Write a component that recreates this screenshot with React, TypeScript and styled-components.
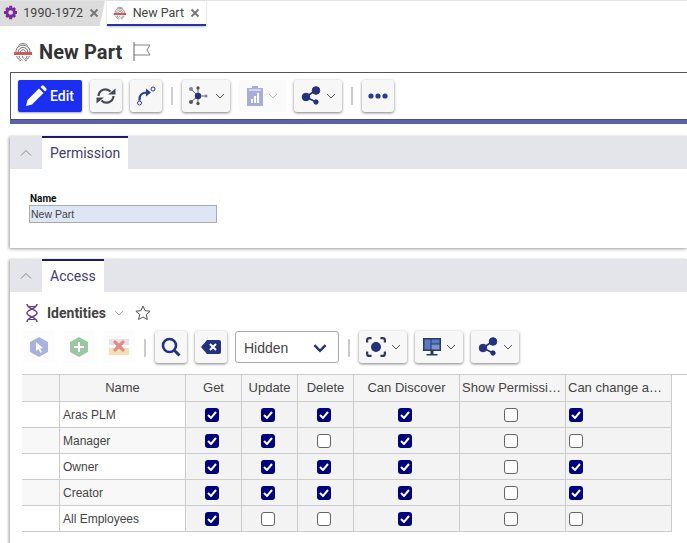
import React, { FC, ReactNode } from "react";
import styled, { createGlobalStyle } from "styled-components";

const GlobalStyle = createGlobalStyle`
  html, body {
    margin: 0;
    padding: 0;
    background: #fff;
    overflow: hidden;
  }
  body {
    font-family: Roboto, "Liberation Sans", sans-serif;
    color: #333;
  }
  * { box-sizing: border-box; }
`;

const Page = styled.div`
  width: 687px;
  height: 543px;
  overflow: hidden;
  display: flex;
  flex-direction: column;
  > * {
    flex: none;
  }
`;

const TabBar = styled.div`
  height: 26px;
  display: flex;
  gap: 2px;
  background: #fff;
  border-top: 1px solid #e4e4e4;
`;

const WindowTab = styled.div<{ $active?: boolean }>`
  width: ${(p) => (p.$active ? "99px" : "105px")};
  height: 25px;
  display: flex;
  align-items: center;
  gap: ${(p) => (p.$active ? "6px" : "6px")};
  padding: 0 0 ${(p) => (p.$active ? "0" : "2px")} ${(p) => (p.$active ? "6px" : "4px")};
  font-size: 12.5px;
  white-space: nowrap;
  color: #444;
  background: ${(p) => (p.$active ? "#fff" : "#dcdcdc")};
  border-bottom: ${(p) => (p.$active ? "2px solid #2a2fb0" : "none")};
  box-shadow: ${(p) => (p.$active ? "0 1px 2px rgba(0,0,0,.25)" : "none")};
  clip-path: ${(p) => (p.$active ? "none" : "polygon(0 0, 100% 0, 95% 100%, 0 100%)")};
`;

const TabClose = styled.span`
  margin-left: auto;
  margin-right: 6px;
  display: flex;
`;

const TitleRow = styled.div`
  height: 46px;
  display: flex;
  align-items: center;
  gap: 6px;
  padding: 6px 0 0 13px;
`;

const Title = styled.h1`
  margin: 0;
  font-size: 20px;
  font-weight: 700;
  color: #333;
  letter-spacing: 0.1px;
`;

const FlagWrap = styled.span`
  display: flex;
  margin-left: 5px;
`;

const ToolbarFrame = styled.div`
  margin-left: 10px;
  height: 48px;
  border-top: 1px solid #555;
  border-left: 1px solid #555;
  border-bottom: 1px solid #555;
  display: flex;
  align-items: center;
  gap: 8px;
  padding-left: 7px;
  background: #fff;
`;

const ToolbarStripe = styled.div`
  margin-left: 10px;
  height: 4px;
  background: #5a62ad;
`;

const PrimaryButton = styled.button`
  width: 64px;
  height: 32px;
  border: none;
  border-radius: 2px;
  background: #1a2ff2;
  color: #fff;
  font: 500 14px Roboto, sans-serif;
  display: flex;
  align-items: center;
  justify-content: center;
  gap: 3px;
  padding: 0 1px 0 0;
  box-shadow: 0 1px 2px rgba(0, 0, 0, 0.35);
`;

const IconButton = styled.button<{ $width?: number; $disabled?: boolean }>`
  width: ${(p) => p.$width ?? 32}px;
  height: 32px;
  border: none;
  border-radius: 3px;
  background: ${(p) => (p.$disabled ? "#fafafa" : "#f7f7f7")};
  box-shadow: ${(p) => (p.$disabled ? "none" : "0 1px 3px rgba(0,0,0,.5)")};
  display: flex;
  align-items: center;
  justify-content: center;
  gap: 5px;
  padding: 0;
  flex: none;
`;

const ToolSep = styled.span`
  width: 2px;
  height: 18px;
  background: #ccc;
  flex: none;
  margin: 0 1px;
`;

const Panel = styled.section<{ $height: number; $gap: number }>`
  margin: ${(p) => p.$gap}px 0 0 10px;
  height: ${(p) => p.$height}px;
  background: #fff;
  box-shadow: -1px 1px 3px rgba(0, 0, 0, 0.4);
`;

const PanelHeader = styled.div`
  height: 33px;
  background: #e4e5ea;
  display: flex;
`;

const Collapse = styled.span`
  width: 32px;
  display: flex;
  align-items: center;
  justify-content: center;
`;

const PanelTab = styled.div`
  padding: 0 8px 2px;
  display: flex;
  align-items: center;
  background: #fff;
  border-top: 2px solid #1b1a6b;
  font-size: 14px;
  color: #3f3d70;
`;

const FormBody = styled.div`
  padding: 23px 0 0 19px;
`;

const FieldLabel = styled.label`
  display: block;
  font: 700 10px/13px Roboto, "Liberation Sans", sans-serif;
  color: #111;
  padding-left: 1px;
`;

const FieldInput = styled.div`
  width: 188px;
  height: 18px;
  background: #dce6f5;
  border: 1px solid #aaa;
  font: 10.5px/16px "Liberation Sans", sans-serif;
  padding-left: 1px;
  color: #444;
`;

const IdentityRow = styled.div`
  height: 39px;
  padding: 9px 0 6px 15px;
  display: flex;
  align-items: center;
  gap: 8px;
`;

const IdentityTitle = styled.span`
  font-size: 14px;
  font-weight: 700;
  line-height: 24px;
  color: #444;
`;

const StarWrap = styled.span`
  display: flex;
  margin-left: 3px;
`;

const GridToolbar = styled.div`
  height: 34px;
  display: flex;
  align-items: flex-start;
  gap: 8px;
  padding-left: 13px;
`;

const FadedIcon = styled.span`
  width: 32px;
  height: 32px;
  display: flex;
  align-items: center;
  justify-content: center;
  background: #fcfcfc;
  flex: none;
`;

const ToolbarGap = styled(ToolSep)`
  align-self: center;
`;

const SelectBox = styled.div`
  width: 104px;
  height: 32px;
  border: 1px solid #aaa;
  border-radius: 3px;
  display: flex;
  align-items: center;
  justify-content: space-between;
  padding: 2px 11px 0 8px;
  font: 14px "Liberation Sans", sans-serif;
  color: #444;
  flex: none;
`;

const GridWrap = styled.div`
  margin: 9px 0 0 12px;
  border-top: 1px solid #ccc;
`;

const Table = styled.div`
  display: grid;
  grid-template-columns: 38px 126px 56px 56px 56px 106px 106px 106px;
  grid-template-rows: 27px;
  grid-auto-rows: 26px;
  width: 650px;
`;

const HeadCell = styled.div<{ $start?: boolean }>`
  background: #f5f5f5;
  border-right: 1px solid #ccc;
  border-bottom: 1px solid #ccc;
  display: flex;
  align-items: center;
  justify-content: ${(p) => (p.$start ? "flex-start" : "center")};
  padding: 0 0 2px ${(p) => (p.$start ? "2px" : "0")};
  font: 13px "Liberation Sans", sans-serif;
  color: #444;
  white-space: nowrap;
  overflow: hidden;
`;

const RowHead = styled.div<{ $shade: boolean }>`
  background: ${(p) => (p.$shade ? "#f8f8f8" : "#fff")};
  border-right: 1px solid #ccc;
  border-bottom: 1px solid #ccc;
`;

const NameCell = styled(RowHead)`
  display: flex;
  align-items: center;
  padding-left: 3px;
  font: 12px "Liberation Sans", sans-serif;
  color: #444;
`;

const CheckCell = styled.div<{ $start?: boolean }>`
  background: #f3f3f3;
  border-right: 1px solid #ccc;
  border-bottom: 1px solid #ccc;
  display: flex;
  align-items: center;
  justify-content: ${(p) => (p.$start ? "flex-start" : "center")};
  padding-left: ${(p) => (p.$start ? "3px" : "0")};
`;

const CheckMark = styled.span<{ $on: boolean }>`
  width: 14px;
  height: 14px;
  margin-right: 3px;
  border-radius: 3px;
  background: ${(p) => (p.$on ? "#00007f" : "#fff")};
  border: ${(p) => (p.$on ? "none" : "1px solid #666")};
  display: flex;
  align-items: center;
  justify-content: center;
`;

const Chev: FC<{ color?: string; size?: number; width?: number }> = ({ color = "#555", size = 10, width = 1 }) => (
  <svg width={size} height={size} viewBox="0 0 10 10" fill="none">
    <path d="M1 3l4 4 4-4" stroke={color} strokeWidth={width} />
  </svg>
);

const Close = () => (
  <svg width="10" height="10" viewBox="0 0 10 10" fill="none" stroke="#777" strokeWidth="2">
    <path d="M1.500 1.500l7 7M8.500 1.500l-7 7" />
  </svg>
);

const Fingerprint: FC<{ size: number }> = ({ size }) => (
  <svg width={size} height={size} viewBox="0 0 20 20" fill="none" stroke="#6f6f6f" strokeWidth="1">
    <path d="M5.500 3.500c2-2.500 7-2.500 9 0" />
    <path d="M3 10c0-9 14-9 14 0" />
    <path d="M5.300 10c0-6 9.400-6 9.400 0" />
    <path d="M7.500 10c0-3 5-3 5 0" />
    <path d="M3.500 14c1 2 2.500 4 4.500 5" />
    <path d="M16.500 14c-1 2-2.500 4-4.500 5" />
    <path d="M6 14c.5 2 2.300 3.500 3.500 4.500" />
    <path d="M14 14c-.5 2-1.500 3-2.500 4" />
    <path d="M9.500 14c0 1 .5 2 1 2.500" />
    <rect x="1" y="10" width="18" height="3" fill="#cf5a55" stroke="none" />
  </svg>
);

const Flag = () => (
  <svg width="18" height="20" viewBox="0 0 18 20" fill="none" stroke="#666" strokeWidth="1">
    <path d="M1 0v19" />
    <path d="M1 3h16l-3 5 3 5H1" strokeWidth=".8" />
  </svg>
);

const Pencil = () => (
  <svg width="22" height="22" viewBox="0 0 22 22" fill="#fff">
    <path d="M1 21l1.500-6L14 3.500l4.500 4.500L7 19.500z" />
    <path d="M15.500 2l1.300-1.200a1.500 1.500 0 0 1 2 0l2.400 2.400a1.500 1.500 0 0 1 0 2L20 6.500z" />
  </svg>
);

const Refresh = () => (
  <svg width="20" height="18" viewBox="0 0 20 18" fill="none" stroke="#414b55" strokeWidth="2.200">
    <path d="M2.500 9a7 7 0 0 1 12-4.500" />
    <path d="M17.500 9a7 7 0 0 1-12 4.500" />
    <path d="M12 7.500h7.500V1.500z" fill="#414b55" stroke="none" />
    <path d="M8 10.500H.5v6z" fill="#414b55" stroke="none" />
  </svg>
);

const Redirect = () => (
  <svg width="20" height="20" viewBox="0 0 20 20" fill="none" stroke="#2b3f8f" strokeWidth="1.600">
    <circle cx="3.500" cy="17" r="2" strokeWidth="1" />
    <path d="M3.500 14.500c-.5-5 2-8 7-8" strokeWidth="2.200" />
    <path d="M10 2.500l5 4-5 4z" fill="#2b3f8f" stroke="none" />
    <circle cx="17" cy="3" r="2" strokeWidth="1" />
  </svg>
);

const Network = () => (
  <svg width="22" height="20" viewBox="0 0 22 20" fill="none">
    <g stroke="#666" strokeWidth="1">
      <path d="M10 10L3 3M10 10L3 16M10 10V2M10 10v7M10 10h9" />
    </g>
    <circle cx="10" cy="10" r="3.200" fill="#23317f" />
    <circle cx="3" cy="3" r="2" fill="#7a7fb5" />
    <circle cx="3" cy="16" r="2" fill="#555" />
    <circle cx="10" cy="2" r="1.700" fill="#555" />
    <circle cx="10" cy="17.500" r="1.700" fill="#555" />
    <circle cx="18" cy="10" r="1.500" fill="#7a7fb5" />
  </svg>
);

const Report = () => (
  <svg width="16" height="20" viewBox="0 0 16 20">
    <rect y="2" width="16" height="18" fill="#a9addb" />
    <rect x="5" y="0" width="6" height="3" fill="#a9addb" />
    <rect x="2" y="3.500" width="12" height="1" fill="#fff" />
    <rect x="4" y="13" width="2" height="4" fill="#fff" />
    <rect x="7" y="10" width="2" height="7" fill="#fff" />
    <rect x="10" y="7" width="2" height="10" fill="#fff" />
  </svg>
);

const Share: FC = () => (
  <svg width="20" height="20" viewBox="0 0 20 20" fill="#23317f" stroke="#23317f">
    <path d="M5 11L15 4M5 11l10 5" strokeWidth="1.600" />
    <circle cx="5" cy="11" r="3.800" />
    <circle cx="15" cy="4.500" r="3.800" />
    <circle cx="15" cy="16" r="2.200" />
  </svg>
);

const Dots = () => (
  <svg width="20" height="6" viewBox="0 0 20 6" fill="#2b3a8f">
    <circle cx="3" cy="3" r="2.600" />
    <circle cx="10" cy="3" r="2.600" />
    <circle cx="17" cy="3" r="2.600" />
  </svg>
);

const Dna = () => (
  <svg width="14" height="18" viewBox="0 0 14 18" fill="none" stroke="#6b3a8f" strokeWidth="1.500">
    <path d="M2 0c0 5 10 5 10 9s-10 4-10 9" />
    <path d="M12 0c0 5-10 5-10 9s10 4 10 9" />
    <path d="M4 2.500h6M4 15.500h6" strokeWidth="1" />
  </svg>
);

const Star = () => (
  <svg width="16" height="16" viewBox="0 0 16 16" fill="none" stroke="#555" strokeWidth="1">
    <path d="M8 1l2.100 4.700 5 .5-3.800 3.300 1.100 5L8 12l-4.400 2.500 1.100-5L.9 6.200l5-.5z" />
  </svg>
);

const PickIcon = () => (
  <svg width="18" height="20" viewBox="0 0 18 20">
    <path d="M9 0l9 5v10l-9 5-9-5V5z" fill="#a9b2dc" />
    <path d="M6 5l7 6-3 .5 2 3.500-1.700.8-1.800-3.600L6 14z" fill="#fff" />
  </svg>
);

const AddIcon = () => (
  <svg width="18" height="20" viewBox="0 0 18 20">
    <path d="M9 0l9 5v10l-9 5-9-5V5z" fill="#9bc8a0" />
    <path d="M8 5h2v4h4v2h-4v4H8v-4H4V9h4z" fill="#fff" />
  </svg>
);

const RemoveIcon = () => (
  <svg width="20" height="16" viewBox="0 0 20 16">
    <rect width="20" height="6" fill="#e4e4e4" />
    <rect y="9" width="20" height="7" fill="#f6dfb2" />
    <path d="M4 3l2-2 4 3.500L14 1l2 2-3.500 4L16 11l-2 2-4-3.500L6 13l-2-2 3.500-4z" fill="#e58a8a" />
  </svg>
);

const Search = () => (
  <svg width="20" height="20" viewBox="0 0 20 20" fill="none" stroke="#23317f" strokeWidth="2.600">
    <circle cx="8.500" cy="8.500" r="6.500" />
    <path d="M13.500 13.500L18.500 18.500" strokeWidth="3" />
  </svg>
);

const Backspace = () => (
  <svg width="20" height="14" viewBox="0 0 20 14">
    <path d="M6 0h12a2 2 0 0 1 2 2v10a2 2 0 0 1-2 2H6L0 7z" fill="#23317f" />
    <path d="M9 4l6 6M15 4l-6 6" stroke="#fff" strokeWidth="2" />
  </svg>
);

const Focus = () => (
  <svg width="20" height="20" viewBox="0 0 18 18" fill="none" stroke="#2f3a55" strokeWidth="2">
    <path d="M1 5V3a2 2 0 0 1 2-2h2M13 1h2a2 2 0 0 1 2 2v2M17 13v2a2 2 0 0 1-2 2h-2M5 17H3a2 2 0 0 1-2-2v-2" />
    <circle cx="9" cy="9" r="4.500" fill="#23317f" stroke="none" />
  </svg>
);

const Layout = () => (
  <svg width="18" height="18" viewBox="0 0 18 18">
    <rect width="18" height="13" fill="#2f3a55" />
    <rect x="1.500" y="1.500" width="6" height="10" fill="#5a78c8" />
    <rect x="8.500" y="1.500" width="8" height="4" fill="#5a78c8" />
    <rect x="8.500" y="6.500" width="8" height="5" fill="#7d93d6" />
    <rect x="7.500" y="13" width="3" height="3" fill="#2f3a55" />
    <rect x="3.500" y="16" width="11" height="1.500" fill="#2f3a55" />
  </svg>
);

const Tick = () => (
  <svg width="10" height="8" viewBox="0 0 10 8" fill="none" stroke="#fff" strokeWidth="2">
    <path d="M1 4l3 3 5-6" />
  </svg>
);

const Gear = () => (
  <svg width="17" height="17" viewBox="0 0 16 16">
    <circle cx="8" cy="8" r="4.500" fill="none" stroke="#7b2a9c" strokeWidth="3.400" />
    <path
      d="M6.200 0h3.600v3h-3.600zM6.200 13h3.600v3h-3.600zM0 6.200h3v3.600H0zM13 6.200h3v3.600h-3zM1.500 3.900L3.900 1.500 6 3.900 3.900 6zM10 12.100l2.100-2.100 2.400 2.100-2.400 2.400zM1.500 12.100L3.900 10 6 12.100 3.900 14.500zM10 3.900l2.100-2.400 2.400 2.400-2.400 2.100z"
      fill="#7b2a9c"
    />
  </svg>
);

const Up = () => (
  <svg width="12" height="8" viewBox="0 0 12 8" fill="none" stroke="#888" strokeWidth="1">
    <path d="M1 6.500l5-5 5 5" />
  </svg>
);

const Tool: FC<{ children: ReactNode; width?: number; disabled?: boolean }> = ({ children, width, disabled }) => (
  <IconButton $width={width} $disabled={disabled}>
    {children}
  </IconButton>
);

type Row = { name: string; checks: boolean[] };

const rows: Row[] = [
  { name: "Aras PLM", checks: [true, true, true, true, false, true] },
  { name: "Manager", checks: [true, true, false, true, false, false] },
  { name: "Owner", checks: [true, true, true, true, false, true] },
  { name: "Creator", checks: [true, true, true, true, false, true] },
  { name: "All Employees", checks: [true, false, false, true, false, false] },
];

const columns = ["", "Name", "Get", "Update", "Delete", "Can Discover", "Show Permissi\u2026", "Can change a\u2026"];

export default function App() {
  return (
    <Page>
      <GlobalStyle />
      <TabBar>
        <WindowTab>
          <Gear />
          <span>1990-1972</span>
          <TabClose><Close /></TabClose>
        </WindowTab>
        <WindowTab $active>
          <Fingerprint size={16} />
          <span>New Part</span>
          <TabClose><Close /></TabClose>
        </WindowTab>
      </TabBar>

      <TitleRow>
        <Fingerprint size={20} />
        <Title>New Part</Title>
        <FlagWrap>
          <Flag />
        </FlagWrap>
      </TitleRow>

      <ToolbarFrame>
        <PrimaryButton>
          <Pencil />
          Edit
        </PrimaryButton>
        <Tool><Refresh /></Tool>
        <Tool><Redirect /></Tool>
        <ToolSep />
        <Tool width={48}>
          <Network />
          <Chev />
        </Tool>
        <Tool width={48} disabled>
          <Report />
          <Chev color="#bbb" />
        </Tool>
        <Tool width={48}>
          <Share />
          <Chev />
        </Tool>
        <ToolSep />
        <Tool><Dots /></Tool>
      </ToolbarFrame>
      <ToolbarStripe />

      <Panel $height={112} $gap={12}>
        <PanelHeader>
          <Collapse><Up /></Collapse>
          <PanelTab>Permission</PanelTab>
        </PanelHeader>
        <FormBody>
          <FieldLabel>Name</FieldLabel>
          <FieldInput>New Part</FieldInput>
        </FormBody>
      </Panel>

      <Panel $height={300} $gap={11}>
        <PanelHeader>
          <Collapse><Up /></Collapse>
          <PanelTab>Access</PanelTab>
        </PanelHeader>
        <IdentityRow>
          <Dna />
          <IdentityTitle>Identities</IdentityTitle>
          <Chev color="#bbb" />
          <StarWrap><Star /></StarWrap>
        </IdentityRow>
        <GridToolbar>
          <FadedIcon><PickIcon /></FadedIcon>
          <FadedIcon><AddIcon /></FadedIcon>
          <FadedIcon><RemoveIcon /></FadedIcon>
          <ToolbarGap />
          <Tool><Search /></Tool>
          <Tool><Backspace /></Tool>
          <SelectBox>
            Hidden
            <Chev color="#23317f" size={14} width={1.8} />
          </SelectBox>
          <ToolbarGap />
          <Tool width={48}>
            <Focus />
            <Chev />
          </Tool>
          <Tool width={48}>
            <Layout />
            <Chev />
          </Tool>
          <Tool width={48}>
            <Share />
            <Chev />
          </Tool>
        </GridToolbar>
        <GridWrap>
          <Table>
            {columns.map((c, i) => (
              <HeadCell key={i} $start={i >= 6}>{c}</HeadCell>
            ))}
            {rows.map((row, r) => (
              <React.Fragment key={row.name}>
                <RowHead $shade={r % 2 === 1} />
                <NameCell $shade={r % 2 === 1}>{row.name}</NameCell>
                {row.checks.map((on, c) => (
                  <CheckCell key={c} $start={c === 5}>
                    <CheckMark $on={on}>{on && <Tick />}</CheckMark>
                  </CheckCell>
                ))}
              </React.Fragment>
            ))}
          </Table>
        </GridWrap>
      </Panel>
    </Page>
  );
}
